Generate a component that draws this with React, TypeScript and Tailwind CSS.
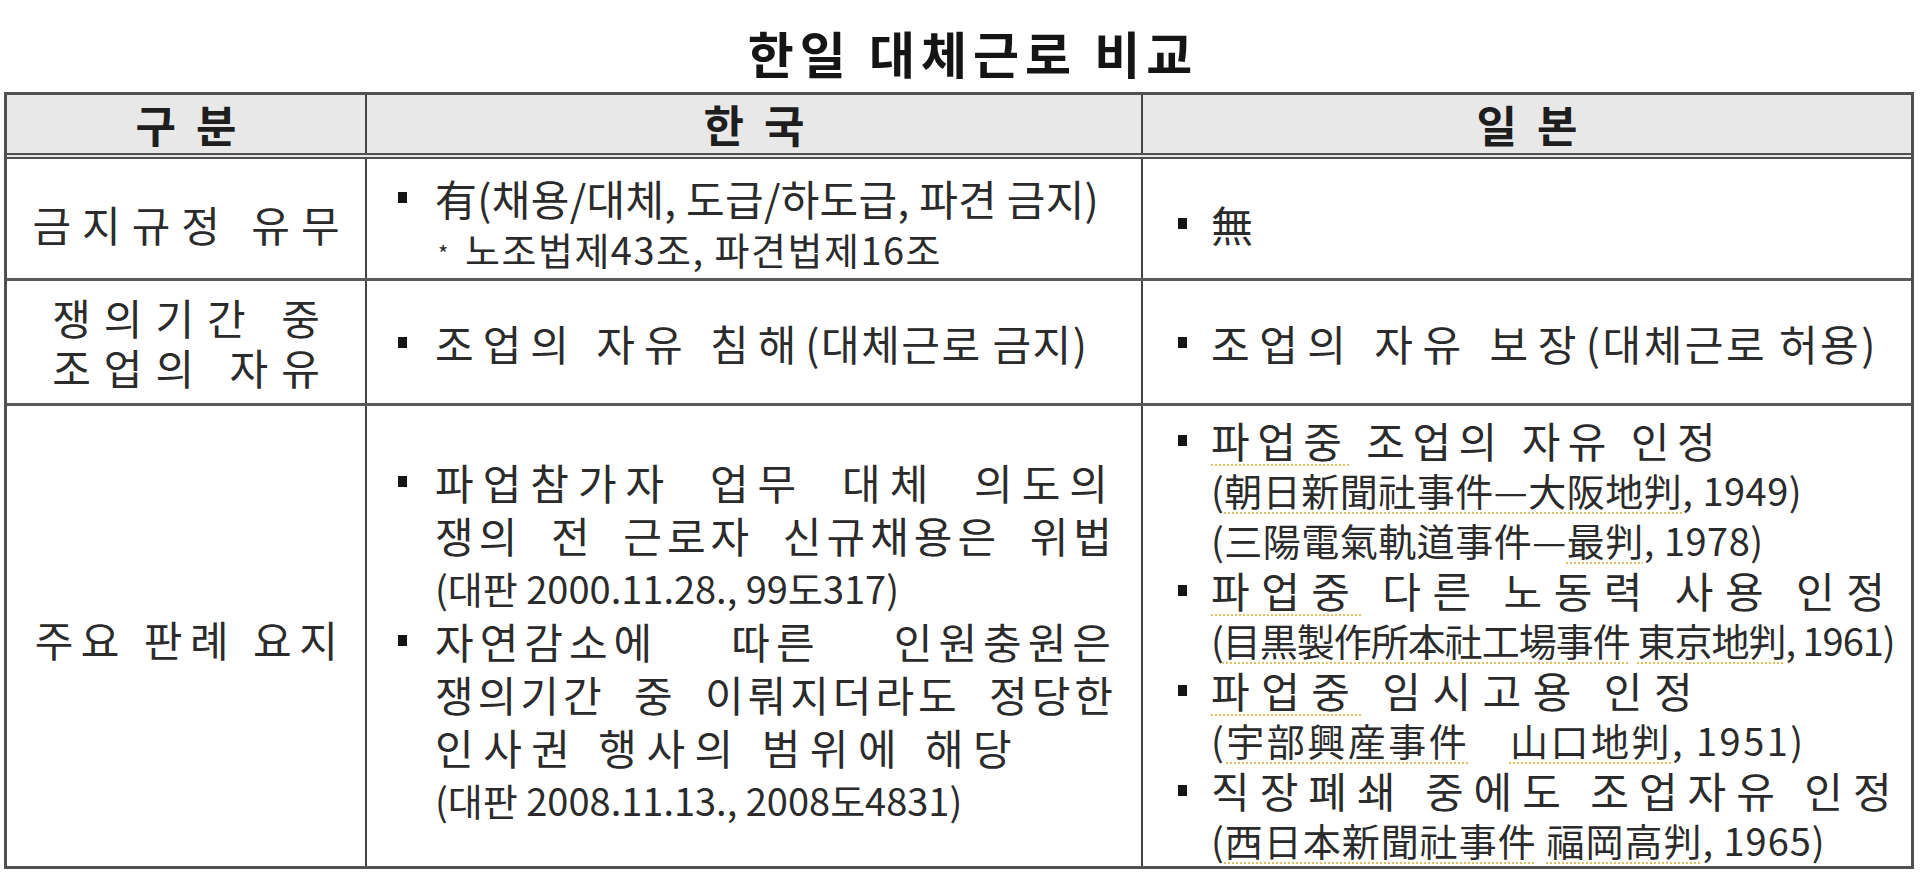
import type { ReactNode } from "react";

const FONT = "font-['Noto_Sans_CJK_KR','Noto_Sans_CJK_JP',sans-serif]";

function Bullet({ gap }: { gap: "mid" | "right" }) {
  return (
    <span
      className={
        gap === "mid"
          ? "mr-[28px] inline-block h-[11px] w-[9px] shrink-0 bg-[#151515]"
          : "mr-[24px] inline-block h-[11px] w-[9px] shrink-0 bg-[#151515]"
      }
    />
  );
}

// hwp spell-check marks under some words
function Mark({ children }: { children: ReactNode }) {
  return (
    <span className="underline decoration-[#dfc163] decoration-dotted decoration-2 underline-offset-[6px]">
      {children}
    </span>
  );
}

function HeadCell({ label, first }: { label: string; first?: boolean }) {
  return (
    <div
      className={
        first
          ? "flex items-center justify-center pl-[20px] text-[44px] font-bold leading-none tracking-[20px] text-[#1e1e1e]"
          : "flex items-center justify-center border-l-2 border-[#444] pl-[20px] text-[44px] font-bold leading-none tracking-[20px] text-[#1e1e1e]"
      }
    >
      {label}
    </div>
  );
}

export default function App() {
  return (
    <div className={`min-h-[878px] bg-white text-[#2b2b2b] ${FONT}`}>
      <h1 className="flex h-[92px] items-center justify-center pl-[26px] pt-[12px] text-[50px] font-bold leading-none tracking-[6px] text-[#151515]">
        한일 대체근로 비교
      </h1>

      <div className="ml-[4px] w-[1910px] border-[3px] border-[#505050]">
        {/* header */}
        <div className="grid h-[64px] grid-cols-[358px_776px_1fr] border-b-[6px] border-double border-[#505050] bg-[#e8e8e8]">
          <HeadCell label="구분" first />
          <HeadCell label="한국" />
          <HeadCell label="일본" />
        </div>

        {/* 금지규정 유무 */}
        <div className="grid h-[122px] grid-cols-[358px_776px_1fr] border-b-[3px] border-[#5a5a5a] text-[42px]">
          <div className="flex items-center justify-center pl-[11px] pt-[10px] leading-none tracking-[11px]">
            금지규정 유무
          </div>
          <div className="flex flex-col justify-center border-l-2 border-[#444] pl-[31px] pt-[12px] leading-[47px]">
            <div className="flex items-center">
              <Bullet gap="mid" />
              <span className="tracking-[0.3px]">有(채용/대체, 도급/하도급, 파견 금지)</span>
            </div>
            <div className="ml-[37px] flex items-center">
              <span className="w-[30px] pl-[3px] pt-[8px] text-[22px]">*</span>
              <span className="text-[38px] tracking-[1.5px]">노조법제43조, 파견법제16조</span>
            </div>
          </div>
          <div className="flex items-center border-l-2 border-[#444] pl-[35px] pt-[10px]">
            <Bullet gap="right" />
            <span>無</span>
          </div>
        </div>

        {/* 쟁의기간 중 조업의 자유 */}
        <div className="grid h-[125px] grid-cols-[358px_776px_1fr] border-b-[3px] border-[#5a5a5a] text-[42px]">
          <div className="flex flex-col items-center justify-center pl-[13px] leading-[50px] tracking-[13px]">
            <span>쟁의기간 중</span>
            <span>조업의 자유</span>
          </div>
          <div className="flex items-center border-l-2 border-[#444] pl-[31px]">
            <Bullet gap="mid" />
            <span>
              <span className="tracking-[9px]">조업의 자유 침해</span>
              <span className="tracking-[1.5px]">(대체근로 금지)</span>
            </span>
          </div>
          <div className="flex items-center border-l-2 border-[#444] pl-[35px]">
            <Bullet gap="right" />
            <span>
              <span className="tracking-[9.5px]">조업의 자유 보장</span>
              <span className="tracking-[2.5px]">(대체근로 허용)</span>
            </span>
          </div>
        </div>

        {/* 주요 판례 요지 */}
        <div className="grid h-[460px] grid-cols-[358px_776px_1fr] text-[42px]">
          <div className="flex items-center justify-center pl-[8px] pt-[6px] leading-none tracking-[7.5px]">
            주요 판례 요지
          </div>

          <div className="flex flex-col justify-center border-l-2 border-[#444] pl-[31px] pt-[8px] leading-[53px]">
            <div className="flex items-center">
              <Bullet gap="mid" />
              <span className="w-[682px] text-justify tracking-[9px] [text-align-last:justify]">
                파업참가자 업무 대체 의도의
              </span>
            </div>
            <div className="ml-[37px] w-[682px] text-justify tracking-[5px] [text-align-last:justify]">
              쟁의 전 근로자 신규채용은 위법
            </div>
            <div className="ml-[37px] text-[38px]">(대판 2000.11.28., 99도317)</div>
            <div className="flex items-center">
              <Bullet gap="mid" />
              <span className="w-[682px] text-justify tracking-[6px] [text-align-last:justify]">
                자연감소에 따른 인원충원은
              </span>
            </div>
            <div className="ml-[37px] w-[682px] text-justify tracking-[4px] [text-align-last:justify]">
              쟁의기간 중 이뤄지더라도 정당한
            </div>
            <div className="ml-[37px] tracking-[9.5px]">인사권 행사의 범위에 해당</div>
            <div className="ml-[37px] text-[38px]">(대판 2008.11.13., 2008도4831)</div>
          </div>

          <div className="flex flex-col justify-center border-l-2 border-[#444] pl-[35px] pt-[8px] leading-[50px]">
            <div className="flex items-center">
              <Bullet gap="right" />
              <span className="tracking-[7.5px]">
                <Mark>파업중</Mark> 조업의 자유 인정
              </span>
            </div>
            <div className="ml-[33px] text-[38px] tracking-[0.5px]">
              (<Mark>朝日新聞社事件—大阪地判</Mark>, 1949)
            </div>
            <div className="ml-[33px] text-[38px] tracking-[0.5px]">
              (三陽電氣軌道事件—<Mark>最判</Mark>, 1978)
            </div>
            <div className="flex items-center">
              <Bullet gap="right" />
              <span className="tracking-[11.5px]">
                <Mark>파업중</Mark> 다른 노동력 사용 인정
              </span>
            </div>
            <div className="ml-[33px] text-[38px] tracking-[-1px]">
              (<Mark>目黒製作所本社工場事件</Mark> <Mark>東京地判</Mark>, 1961)
            </div>
            <div className="flex items-center">
              <Bullet gap="right" />
              <span className="tracking-[11.5px]">
                <Mark>파업중</Mark> 임시고용 인정
              </span>
            </div>
            <div className="ml-[33px] text-[38px] tracking-[2.5px]">
              (<Mark>宇部興産事件</Mark>　<Mark>山口地判</Mark>, 1951)
            </div>
            <div className="flex items-center">
              <Bullet gap="right" />
              <span className="tracking-[10px]">직장폐쇄 중에도 조업자유 인정</span>
            </div>
            <div className="ml-[33px] text-[38px] tracking-[1px]">
              (<Mark>西日本新聞社事件</Mark> <Mark>福岡高判</Mark>, 1965)
            </div>
          </div>
        </div>
      </div>
    </div>
  );
}
